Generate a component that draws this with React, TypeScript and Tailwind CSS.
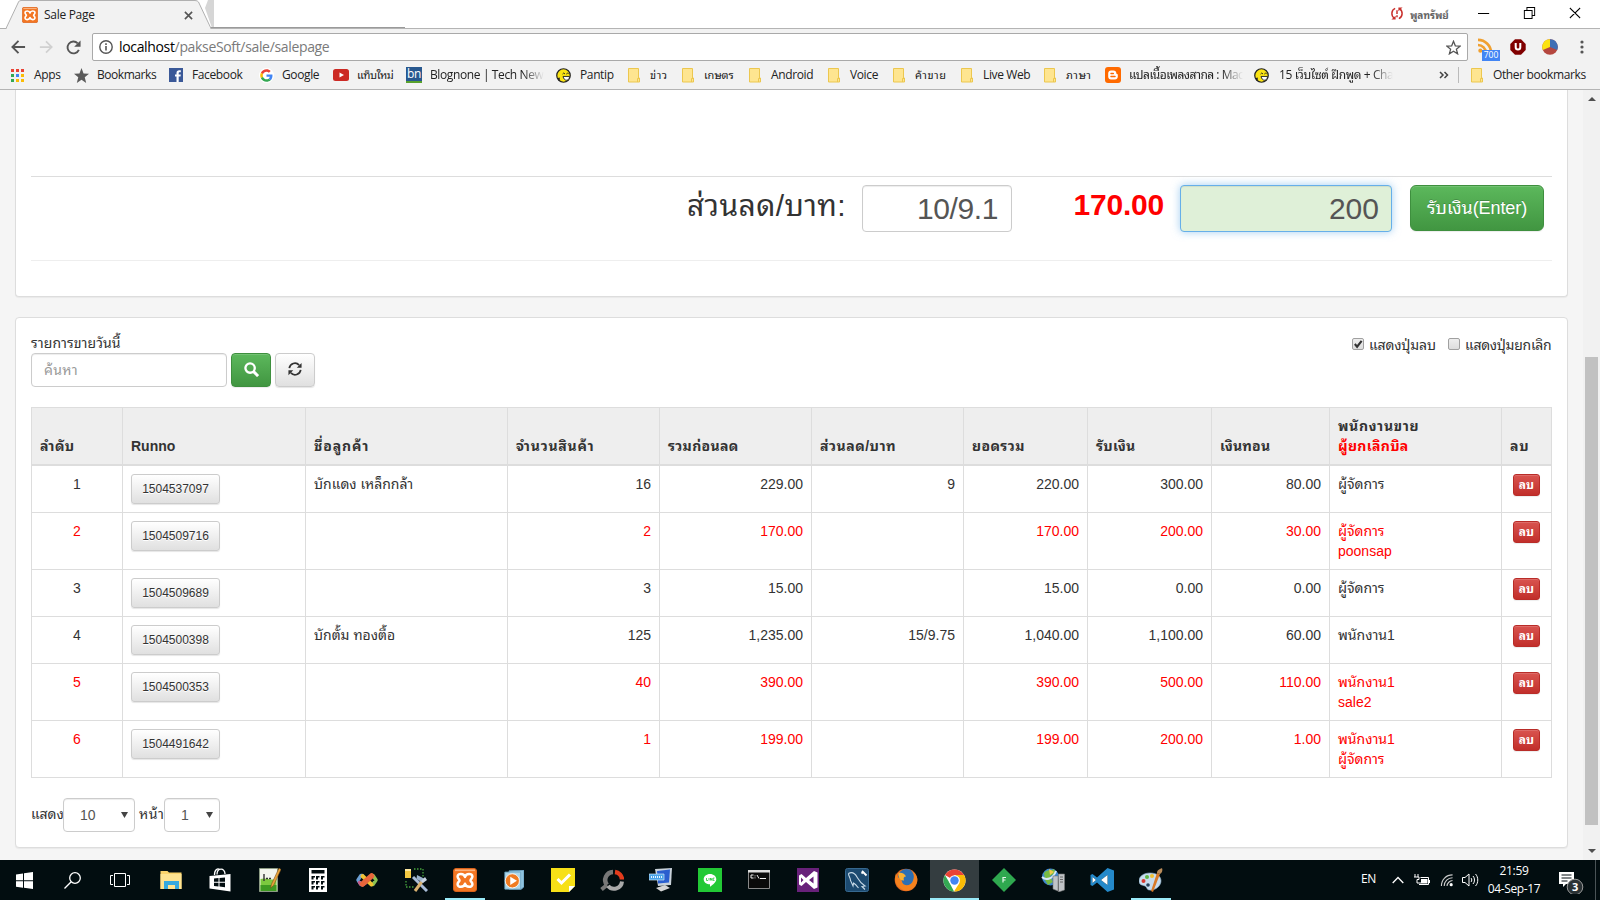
import React from "react";

type IconProps = { className?: string };

const BOX = "0 0 24 24";

function Xampp({ className }: IconProps) {
  return (
    <svg viewBox={BOX} className={className}>
      <rect x="0.5" y="0.5" width="23" height="23" rx="2.5" fill="#f37623" stroke="#d9611a" />
      <rect x="2" y="1.5" width="20" height="1.6" fill="#fbb27e" />
      <path
        d="M12 9C11 5 4.600 5 4.600 8.600c0 2 1.600 2.300 1.900 3.800-.3 1.500-1.900 1.800-1.900 3.800 0 3.600 6.400 3.600 7.400-.4 1 4 7.400 4 7.400.4 0-2-1.600-2.300-1.900-3.800.3-1.500 1.900-1.800 1.900-3.800 0-3.600-6.400-3.600-7.400.4z"
        fill="none" stroke="#fff" strokeWidth="2.500" strokeLinejoin="round"
      />
    </svg>
  );
}

function Folder() {
  return (
    <svg viewBox="0 0 12 15" className="h-[15px] w-3">
      <path d="M.5.500h10v9.500h1v4H.5z" fill="#fee590" stroke="#ecc74f" />
      <path d="M9.500 14v-3.500h2" fill="none" stroke="#ecc74f" />
    </svg>
  );
}

function Smiley() {
  return (
    <svg viewBox="0 0 16 16" className="h-[15px] w-[15px]">
      <circle cx="8" cy="8" r="7.200" fill="#fbe413" stroke="#222" strokeWidth="1.300" />
      <path d="M7 6.500l1.300-1.200L9.600 6.500M11 6.500l1.300-1.200 1.200 1.200" fill="none" stroke="#222" />
      <path d="M7.500 9h7c0 3-2 4-3.500 4s-3-1.500-3.500-4z" fill="#fff" stroke="#222" />
      <path d="M1 11l3-1v4z" fill="#222" />
    </svg>
  );
}

function AppsGrid() {
  const colors = ["#ea4335", "#ea4335", "#ea4335", "#34a853", "#4285f4", "#fbbc05", "#34a853", "#fbbc05", "#fbbc05"];
  return (
    <svg viewBox="0 0 13 13" className="h-[13px] w-[13px]">
      {colors.map((c, i) => (
        <rect key={i} x={(i % 3) * 5} y={Math.floor(i / 3) * 5} width="3" height="3" fill={c} />
      ))}
    </svg>
  );
}

function Google() {
  return (
    <svg viewBox="0 0 48 48" className="h-[15px] w-[15px]">
      <circle cx="24" cy="24" r="24" fill="#fff" />
      <g transform="translate(4 4) scale(.833)">
        <path fill="#EA4335" d="M24 9.500c3.540 0 6.710 1.220 9.210 3.600l6.850-6.850C35.900 2.380 30.470 0 24 0 14.620 0 6.510 5.380 2.560 13.220l7.980 6.190C12.430 13.720 17.740 9.500 24 9.500z" />
        <path fill="#4285F4" d="M46.980 24.550c0-1.570-.15-3.090-.38-4.550H24v9.020h12.940c-.58 2.960-2.260 5.480-4.780 7.180l7.730 6c4.510-4.180 7.090-10.360 7.090-17.650z" />
        <path fill="#FBBC05" d="M10.530 28.590c-.48-1.450-.76-2.990-.76-4.590s.27-3.140.76-4.590l-7.980-6.190C.92 16.460 0 20.120 0 24c0 3.880.92 7.540 2.560 10.780l7.970-6.190z" />
        <path fill="#34A853" d="M24 48c6.480 0 11.930-2.130 15.890-5.810l-7.730-6c-2.150 1.450-4.920 2.300-8.160 2.300-6.260 0-11.570-4.220-13.470-9.910l-7.980 6.190C6.510 42.620 14.620 48 24 48z" />
      </g>
    </svg>
  );
}

const fade = "[mask-image:linear-gradient(to_right,#000_93px,transparent_114px)]";

type Mark = { label: string; icon: React.ReactNode; box: string; text: string };

const bookmarks: Mark[] = [
  { label: "Apps", box: "w-[63px] gap-[10px]", text: "", icon: <AppsGrid /> },
  {
    label: "Bookmarks", box: "w-[95px] gap-[8px]", text: "tracking-[-0.45px]",
    icon: (
      <svg viewBox="0 0 24 24" className="h-[15px] w-[15px]"><path d="M12 0l3.300 8.600L24 9l-6.800 5.600L19.500 24 12 18.700 4.500 24l2.300-9.400L0 9l8.700-.4z" fill="#5a5a5a" /></svg>
    ),
  },
  {
    label: "Facebook", box: "w-[90px] gap-[9px]", text: "",
    icon: (
      <svg viewBox="0 0 14 14" className="h-[14px] w-[14px]"><path fill="#3b5998" d="M0 0h14v14H0z" /><path fill="#fff" d="M7.500 14V8.500H6v-2h1.500V5c0-1.800 1-2.800 2.700-2.800h1.600v2h-1.200c-.7 0-.9.3-.9.900v1.400h2.100l-.3 2H9.700V14z" /></svg>
    ),
  },
  { label: "Google", box: "w-[74px] gap-[8px]", text: "", icon: <Google /> },
  {
    label: "แท็บใหม่", box: "w-[73px] gap-[8px]", text: "text-[11px] tracking-[-0.45px]",
    icon: (
      <svg viewBox="0 0 16 12" className="h-[12px] w-[16px]"><rect width="16" height="12" rx="2.500" fill="#cc2a24" /><path d="M6.500 3.500v5L11 6z" fill="#fff" /></svg>
    ),
  },
  {
    label: "Blognone | Tech News", box: "w-[150px] gap-[8px]", text: fade,
    icon: (
      <span className="flex h-4 w-4 items-center justify-center border-b-2 border-[#58a12c] bg-[#28588f] text-[12px] leading-none text-white">bn</span>
    ),
  },
  { label: "Pantip", box: "w-[72px] gap-[9px]", text: "", icon: <Smiley /> },
  { label: "ข่าว", box: "w-[54px] gap-[10px]", text: "text-[11px] tracking-[0.6px]", icon: <Folder /> },
  { label: "เกษตร", box: "w-[67px] gap-[10px]", text: "text-[11px] tracking-[-0.1px]", icon: <Folder /> },
  { label: "Android", box: "w-[79px] gap-[10px]", text: "", icon: <Folder /> },
  { label: "Voice", box: "w-[65px] gap-[10px]", text: "", icon: <Folder /> },
  { label: "ค้าขาย", box: "w-[68px] gap-[10px]", text: "text-[11px] tracking-[0.5px]", icon: <Folder /> },
  { label: "Live Web", box: "w-[83px] gap-[10px]", text: "", icon: <Folder /> },
  { label: "ภาษา", box: "w-[61px] gap-[10px]", text: "text-[11px] tracking-[0.5px]", icon: <Folder /> },
  {
    label: "แปลเนื้อเพลงสากล : Mac", box: "w-[149px] gap-[8px]", text: "tracking-[-0.5px] " + fade,
    icon: (
      <svg viewBox="0 0 16 16" className="h-4 w-4"><rect width="16" height="16" rx="3" fill="#ff6a00" /><path d="M6 3.500h2.500C10.200 3.500 11.300 4.700 11.300 6c0 .6.300.9.700.9.500 0 .8.300.8.800v2c0 1.600-1.200 2.800-2.800 2.800H6c-1.600 0-2.800-1.200-2.800-2.800V6.300c0-1.600 1.200-2.800 2.800-2.800z" fill="#fff" /><path d="M6 6.400h2.300M6 9.600h4" stroke="#ff6a00" strokeWidth="1.500" strokeLinecap="round" /></svg>
    ),
  },
  { label: "15 เว็บไซต์ ฝึกพูด + Chat", box: "w-[185px] gap-[10px]", text: fade, icon: <Smiley /> },
];

function TitleBar() {
  return (
    <div className="relative flex h-[30px] items-start bg-white">
      <svg className="absolute left-0 top-0 h-[30px] w-full" viewBox="0 0 1600 30" preserveAspectRatio="none">
        <path d="M214 0h-6l-3 8 7 20h2z" fill="#d6d6d6" />
        <path d="M211 27.500H405" stroke="#9a9a9a" fill="none" />
        <path d="M0 28.500H1600" stroke="#b4b4b4" fill="none" />
        <path d="M0 29h1600v1H0z" fill="#f2f2f2" />
        <path d="M6 29.500L18.500 2Q19 .5 21 .5H195Q197.500.500 198.500 2L211 29.500z" fill="#f2f2f2" />
        <path d="M0 28.500H6L18.500 2Q19 .5 21 .5H195Q197.500.500 198.500 2L211 28.500" fill="none" stroke="#b0b0b0" />
      </svg>
      <div className="relative flex h-[30px] w-full items-center pl-[22px]">
        <Xampp className="h-4 w-4" />
        <span className="ml-[6px] w-[140px] text-[12px] tracking-[-0.3px] text-[#222]">Sale Page</span>
        <svg viewBox="0 0 10 10" className="h-[9px] w-[9px]"><path d="M1 1l8 8M9 1L1 9" stroke="#555" strokeWidth="1.800" /></svg>
        <svg viewBox="0 0 14 14" className="ml-auto mb-[3px] h-[13px] w-[14px]">
          <g fill="none" stroke="#c9302c" strokeWidth="1.600"><path d="M5 1.500C.5 3.500.5 9.500 4 12M9 12.500c4.500-2 4.500-8 1-10.500" /><path d="M7 3.500v4M7 9v2" /></g>
          <path d="M1 13.500h4.500V9.500zM13 .5H8.500v4z" fill="#c9302c" />
        </svg>
        <span className="ml-[6px] w-[39px] whitespace-nowrap text-[10px] font-bold tracking-[-0.1px] text-[#666]">พูลทรัพย์</span>
        <svg viewBox="0 0 120 12" className="mb-1 ml-[29px] mr-[19px] h-3 w-[103px]" preserveAspectRatio="none">
          <g fill="none" stroke="#000" strokeWidth="1.100"><path d="M0 6.500h13M54 3.500h9v8h-9zM57 3.500v-3h9v8h-3M107 1l12 10M119 1l-12 10" /></g>
        </svg>
      </div>
    </div>
  );
}

function Toolbar() {
  return (
    <div className="flex h-[34px] items-center bg-[#f2f2f2] pl-[11px]">
      <svg viewBox="0 0 16 16" className="h-4 w-[15px]"><path d="M15 8H2M8 1.500L1.500 8 8 14.500" fill="none" stroke="#555" strokeWidth="2" /></svg>
      <svg viewBox="0 0 16 16" className="ml-[13px] h-4 w-[14px]"><path d="M1 8h13M8 1.500L14.500 8 8 14.500" fill="none" stroke="#d0d0d0" strokeWidth="2" /></svg>
      <svg viewBox="0 0 16 16" className="ml-[13px] h-[15px] w-[15px]"><path d="M13.700 10.500A6.300 6.300 0 1 1 12.500 3.600" fill="none" stroke="#555" strokeWidth="2" /><path d="M15.500.500v6.800H8.700z" fill="#555" /></svg>
      <div className="ml-[11px] flex h-[28px] w-[1376px] items-center rounded-[2px] border border-[#a9a9a9] bg-white pl-[6px] pr-[6px]">
        <svg viewBox="0 0 14 14" className="h-[14px] w-[14px]"><circle cx="7" cy="7" r="6.200" fill="none" stroke="#555" strokeWidth="1.400" /><path d="M7 6v4.500M7 3.300v1.600" stroke="#555" strokeWidth="1.600" /></svg>
        <span className="mb-[2px] ml-[6px] text-[14px] tracking-[-0.34px] text-[#7a7a7a]"><span className="text-black">localhost</span>/pakseSoft/sale/salepage</span>
        <svg viewBox="0 0 24 24" className="ml-auto h-[15px] w-[15px]"><path d="M12 2l2.900 7.300 7.600.5-5.900 4.900 2 7.500L12 18l-6.600 4.200 2-7.500L1.500 9.800l7.600-.5z" fill="none" stroke="#555" strokeWidth="2" /></svg>
      </div>
      <div className="relative ml-[10px] h-[26px] w-[24px]">
        <svg viewBox="0 0 16 16" className="mt-[4px] h-[15px] w-[15px]"><circle cx="2.500" cy="13.500" r="2.200" fill="#f0a030" /><path d="M0 7.500A8.500 8.500 0 0 1 8.500 16M0 2A14 14 0 0 1 14 16" fill="none" stroke="#f0a030" strokeWidth="2.800" /></svg>
        <span className="absolute left-[4px] top-[16px] flex h-[11px] w-[18px] items-center justify-center bg-[#4285f4] text-[8.500px] text-white">700</span>
      </div>
      <svg viewBox="0 0 16 16" className="ml-[8px] h-4 w-4"><path d="M5 .3h6L15.700 5v6L11 15.700H5L.3 11V5z" fill="#800000" /><path d="M5.700 4v4.200a2.300 2.300 0 0 0 4.600 0V4" fill="none" stroke="#fff" strokeWidth="2" /></svg>
      <svg viewBox="0 0 16 16" className="ml-[16px] h-4 w-4"><circle cx="8" cy="8" r="7.800" fill="#b5473f" /><path d="M8 8V.2A7.800 7.800 0 0 0 .8 11z" fill="#fbe311" /><path d="M8 8V.2A7.800 7.800 0 0 1 15.200 11z" fill="#3f6fb5" /></svg>
      <svg viewBox="0 0 4 14" className="ml-[22px] h-[14px] w-[4px]"><g fill="#555"><circle cx="2" cy="2" r="1.600" /><circle cx="2" cy="7" r="1.600" /><circle cx="2" cy="12" r="1.600" /></g></svg>
    </div>
  );
}

function BookmarksBar() {
  return (
    <div className="flex h-[26px] items-center whitespace-nowrap border-b border-[#b4b4b4] bg-[#f2f2f2] pb-[3px] pl-[11px] text-[12px] tracking-[-0.38px] text-[#222]">
      {bookmarks.map((b) => (
        <div key={b.label} className={"flex shrink-0 items-center " + b.box}>
          <span className="shrink-0">{b.icon}</span>
          <span className={b.text}>{b.label}</span>
        </div>
      ))}
      <svg viewBox="0 0 10 8" className="h-2 w-[10px]"><path d="M1 1l3 3-3 3M5.500 1l3 3-3 3" fill="none" stroke="#444" strokeWidth="1.500" /></svg>
      <div className="ml-[9px] mr-[12px] h-4 w-px bg-[#bbb]" />
      <Folder />
      <span className="ml-[10px]">Other bookmarks</span>
    </div>
  );
}

type Row = {
  run: string; name: string; qty: string; before: string; disc: string;
  total: string; paid: string; change: string; seller: string[]; red: boolean; h: string;
};

const rows: Row[] = [
  { run: "1504537097", name: "บักแดง เหล็กกล้า", qty: "16", before: "229.00", disc: "9", total: "220.00", paid: "300.00", change: "80.00", seller: ["ผู้จัดการ"], red: false, h: "h-[47px]" },
  { run: "1504509716", name: "", qty: "2", before: "170.00", disc: "", total: "170.00", paid: "200.00", change: "30.00", seller: ["ผู้จัดการ", "poonsap"], red: true, h: "h-[57px]" },
  { run: "1504509689", name: "", qty: "3", before: "15.00", disc: "", total: "15.00", paid: "0.00", change: "0.00", seller: ["ผู้จัดการ"], red: false, h: "h-[47px]" },
  { run: "1504500398", name: "บักตั้ม ทองตื้อ", qty: "125", before: "1,235.00", disc: "15/9.75", total: "1,040.00", paid: "1,100.00", change: "60.00", seller: ["พนักงาน1"], red: false, h: "h-[47px]" },
  { run: "1504500353", name: "", qty: "40", before: "390.00", disc: "", total: "390.00", paid: "500.00", change: "110.00", seller: ["พนักงาน1", "sale2"], red: true, h: "h-[57px]" },
  { run: "1504491642", name: "", qty: "1", before: "199.00", disc: "", total: "199.00", paid: "200.00", change: "1.00", seller: ["พนักงาน1", "ผู้จัดการ"], red: true, h: "h-[57px]" },
];

const cell = "border-b border-r border-[#ddd] px-2 pt-2 align-top overflow-hidden";

function SalesTable() {
  return (
    <table className="mt-[20px] w-[1521px] table-fixed border-separate border-spacing-0 border-l border-t border-[#ddd] text-[14px] leading-5">
      <colgroup>
        <col className="w-[91px]" /><col className="w-[183px]" /><col className="w-[202px]" /><col className="w-[152px]" />
        <col className="w-[152px]" /><col className="w-[152px]" /><col className="w-[124px]" /><col className="w-[124px]" />
        <col className="w-[118px]" /><col className="w-[172px]" /><col className="w-[50px]" />
      </colgroup>
      <thead>
        <tr className="h-[58px] text-left [&>th]:border-b-2 [&>th]:border-r [&>th]:border-[#ddd] [&>th]:bg-[#eee] [&>th]:px-2 [&>th]:pb-[8px] [&>th]:align-bottom [&>th]:font-bold">
          <th className="tracking-[0.5px]">ลำดับ</th>
          <th>Runno</th>
          <th className="tracking-[0.9px]">ชื่อลูกค้า</th>
          <th className="tracking-[0.75px]">จำนวนสินค้า</th>
          <th className="tracking-[0.3px]">รวมก่อนลด</th>
          <th className="tracking-[0.5px]">ส่วนลด/บาท</th>
          <th className="tracking-[0.4px]">ยอดรวม</th>
          <th className="tracking-[0.3px]">รับเงิน</th>
          <th className="tracking-[0.2px]">เงินทอน</th>
          <th><span className="tracking-[0.65px]">พนักงานขาย</span><br /><span className="tracking-[0.3px] text-[#f00]">ผู้ยกเลิกบิล</span></th>
          <th className="tracking-[0.8px]">ลบ</th>
        </tr>
      </thead>
      <tbody>
        {rows.map((r, i) => (
          <tr key={r.run} className={r.h + (r.red ? " text-[#f00]" : "")}>
            <td className={cell + " text-center"}>{i + 1}</td>
            <td className={cell}>
              <button className="flex h-[30px] w-[89px] items-center justify-center rounded-[3px] border border-[#ccc] bg-linear-to-b from-white to-[#e0e0e0] text-[12px] text-[#333] shadow-[0_1px_1px_rgba(0,0,0,0.1)] [text-shadow:0_1px_0_#fff]">{r.run}</button>
            </td>
            <td className={cell}>{r.name}</td>
            <td className={cell + " text-right"}>{r.qty}</td>
            <td className={cell + " text-right"}>{r.before}</td>
            <td className={cell + " text-right"}>{r.disc}</td>
            <td className={cell + " text-right"}>{r.total}</td>
            <td className={cell + " text-right"}>{r.paid}</td>
            <td className={cell + " text-right"}>{r.change}</td>
            <td className={cell}>{r.seller.map((s) => <div key={s}>{s}</div>)}</td>
            <td className={cell}>
              <button className="mx-auto flex h-[22px] w-[27px] items-center justify-center rounded-[3px] border border-[#b92c28] bg-linear-to-b from-[#d9534f] to-[#c12e2a] text-[12px] font-bold leading-none text-white shadow-[inset_0_1px_0_rgba(255,255,255,0.15),0_1px_1px_rgba(0,0,0,0.075)]">ลบ</button>
            </td>
          </tr>
        ))}
      </tbody>
    </table>
  );
}

const field = "border border-[#ccc] bg-white text-[#555] shadow-[inset_0_1px_1px_rgba(0,0,0,0.075)]";
const green = "flex items-center justify-center border border-[#3e8f3e] bg-linear-to-b from-[#5cb85c] to-[#419641] text-white shadow-[inset_0_1px_0_rgba(255,255,255,0.15),0_1px_1px_rgba(0,0,0,0.075)]";

function Select({ value, box }: { value: string; box: string }) {
  return (
    <div className={"flex h-[34px] items-center justify-between rounded-[4px] pr-[6px] text-[14px] " + field + " " + box}>
      <span>{value}</span>
      <svg viewBox="0 0 7 6" className="mb-px h-[6px] w-[7px]" preserveAspectRatio="none"><path d="M0 0h7L3.500 6z" fill="#444" /></svg>
    </div>
  );
}

function Page() {
  return (
    <div className="flex h-[770px] overflow-hidden bg-[#f5f5f5] text-[14px] leading-5 text-[#333] font-['Liberation_Sans','Noto_Sans_Thai_Looped','Loma','Waree','Noto_Sans_Thai',sans-serif]">
      <div className="flex w-[1583px] flex-col pl-[15px]">
        <section className="h-[207px] w-[1553px] shrink-0 rounded-b-[4px] border border-t-0 border-[#ddd] bg-white px-[15px] shadow-[0_1px_1px_rgba(0,0,0,0.05)]">
          <div className="h-[86px]" />
          <div className="flex h-[84px] items-start border-t border-[#ddd] pt-[8px]">
            <div className="ml-auto mr-[16px] mt-1 whitespace-nowrap text-[30px] leading-[33px] tracking-[0.4px]">ส่วนลด/บาท:</div>
            <div className={"flex h-[47px] w-[150px] items-center justify-end rounded-[4px] pr-[13px] text-[30px] tracking-[-0.4px] " + field}>10/9.1</div>
            <div className="w-[152px] pt-[3px] text-right text-[30px] font-bold leading-[33px] tracking-[-0.2px] text-[#f00]">170.00</div>
            <div className="ml-[16px] flex h-[47px] w-[212px] items-center justify-end rounded-[4px] border border-[#66afe9] bg-[#dff0d8] pr-[12px] text-[30px] text-[#555] shadow-[inset_0_1px_1px_rgba(0,0,0,0.075),0_0_8px_rgba(102,175,233,0.6)]">200</div>
            <button className={"ml-[18px] mr-[8px] h-[46px] w-[134px] whitespace-nowrap rounded-[6px] text-[18px] tracking-[-0.1px] [text-shadow:0_-1px_0_rgba(0,0,0,0.2)] " + green}>รับเงิน(Enter)</button>
          </div>
          <div className="h-px bg-[#eee]" />
        </section>
        <section className="mt-[20px] h-[531px] w-[1553px] shrink-0 rounded-[4px] border border-[#ddd] bg-white px-[15px] pt-[15px] shadow-[0_1px_1px_rgba(0,0,0,0.05)]">
          <div className="flex h-[54px] justify-between">
            <div>
              <div className="h-5 tracking-[0.1px]">รายการขายวันนี้</div>
              <div className="flex gap-1">
                <div className={"flex h-[34px] w-[196px] items-center rounded-[4px] pl-[12px] " + field}><span className="tracking-[0.3px] text-[#999]">ค้นหา</span></div>
                <button className={"h-[34px] w-[40px] rounded-[4px] pb-px " + green}>
                  <svg viewBox="0 0 16 16" className="h-[15px] w-[15px]"><circle cx="6.500" cy="6.500" r="5" fill="none" stroke="#fff" strokeWidth="2.500" /><path d="M10 10l5 5" stroke="#fff" strokeWidth="3.200" /></svg>
                </button>
                <button className="flex h-[34px] w-[40px] items-center justify-center rounded-[4px] border border-[#ccc] bg-linear-to-b from-white to-[#e0e0e0] pb-[2px] pr-px shadow-[0_1px_1px_rgba(0,0,0,0.1)]">
                  <svg viewBox="0 0 16 16" className="h-[14px] w-[14px]"><path d="M1.500 7A6.500 6.500 0 0 1 12.700 3.500M14.500 9A6.500 6.500 0 0 1 3.300 12.500" fill="none" stroke="#333" strokeWidth="2" /><path d="M15.500 1v5.500H10zM.5 15V9.500H6z" fill="#333" /></svg>
                </button>
              </div>
            </div>
            <div className="flex h-[24px] items-center">
              <div className="mb-[3px] mr-[5px] h-[12px] w-[12px] rounded-[2px] border border-[#a0a0a0] bg-linear-to-b from-[#eee] to-[#ddd]">
                <svg viewBox="0 0 11 11" className="h-[10px] w-[10px]"><path d="M2 5.500l2.500 3L9.500 2" fill="none" stroke="#333" strokeWidth="2.300" /></svg>
              </div>
              <span className="w-[67px] whitespace-nowrap tracking-[-0.15px]">แสดงปุ่มลบ</span>
              <div className="mb-[3px] ml-[12px] mr-[5px] h-[12px] w-[12px] rounded-[2px] border border-[#a0a0a0] bg-linear-to-b from-[#eee] to-[#ddd]" />
              <span className="w-[87px] whitespace-nowrap tracking-[-0.28px]">แสดงปุ่มยกเลิก</span>
            </div>
          </div>
          <SalesTable />
          <div className="mt-[20px] flex items-center">
            <span className="mb-[2px] w-[32px] tracking-[-0.1px]">แสดง</span>
            <Select value="10" box="w-[72px] pl-[16px]" />
            <span className="mb-[2px] ml-[4px] w-[25px] tracking-[0.5px]">หน้า</span>
            <Select value="1" box="w-[56px] pl-[16px]" />
          </div>
        </section>
      </div>
      <div className="flex w-[17px] flex-col items-center bg-[#f1f1f1] py-[7px]">
        <svg viewBox="0 0 8 4" className="h-1 w-2"><path d="M0 4h8L4 0z" fill="#505050" /></svg>
        <div className="mt-[256px] h-[468px] w-[13px] bg-[#c1c1c1]" />
        <svg viewBox="0 0 8 4" className="mt-auto h-1 w-2"><path d="M0 0h8L4 4z" fill="#505050" /></svg>
      </div>
    </div>
  );
}

const S = "h-6 w-6";

const taskIcons: React.ReactNode[] = [
  <svg viewBox={BOX} className={S}><path d="M1.500 3h7L10 4.500h12.500V21h-21z" fill="#fbd36b" /><path d="M1.500 6h21v15h-21z" fill="#ffe391" /><path d="M5 13h15v8h-4v-4H9v4H5z" fill="#35a9e0" /></svg>,
  <svg viewBox={BOX} className={S}><path d="M1.500 8l21-2v17.500l-21-3z" fill="#fff" /><path d="M6.500 7C6.500 1 10 0 11.500 1.500M9 6.500C9-.500 17-.500 17 6" fill="none" stroke="#fff" strokeWidth="1.300" /><path d="M6 10.500l4.500-.4v3.700H6zM11.500 10l5.500-.5v4.300h-5.500zM6 14.800h4.500v3.700L6 18zM11.500 14.800H17v4.400l-5.500-.6z" fill="#020d10" /></svg>,
  <svg viewBox={BOX} className={S}><path d="M2.500.5h18v23h-18z" fill="#f2f5ee" stroke="#8c9b84" /><path d="M3.500 11c5-2 11 2 16 0v12h-16z" fill="#7cc93f" /><path d="M3.500 17h16v6h-16z" fill="#3e9a22" /><path d="M7 6v7M9 10.500h2M12 10.500h2" stroke="#333" strokeWidth="1.400" /><path d="M22 0L14.500 16l-1 4 3-2.500L24 1.500z" fill="#e8a33b" stroke="#6d4416" strokeWidth=".5" /></svg>,
  <svg viewBox={BOX} className={S}><path d="M3 0h18v24H3z" fill="#fff" /><path d="M5.500 2h13v3.500h-13z" fill="#020d10" /><g fill="#020d10">{[8, 13, 18].map((y) => [5.5, 10, 15].map((x) => <path key={x + "-" + y} d={`M${x} ${y}h3.500v1.500h-1.500v2h-2z`} />))}</g></svg>,
  <svg viewBox={BOX} className={S}><g fill="none" strokeLinejoin="round" strokeLinecap="round"><path d="M7.500 7.500H6L3 12l3 4.500h1.500" stroke="#6c9fd4" strokeWidth="3.500" /><path d="M16.500 7.500H18l3 4.500-3 4.500h-1.500" stroke="#8cc152" strokeWidth="3.500" /><path d="M4.500 14.500L6 16.500h2l3-2" stroke="#c05a8c" strokeWidth="3.500" /><path d="M7.500 8l9 8.500" stroke="#f1c232" strokeWidth="4" /><path d="M7.500 16L16.500 8" stroke="#e9663b" strokeWidth="5.500" /></g></svg>,
  <svg viewBox={BOX} className={S}><path d="M1 1h6v9H1z" fill="#f4c842" /><path d="M1 1h6v2H1z" fill="#ffe9a0" /><path d="M10 1h9v9M2 13v6h8" fill="none" stroke="#46a23c" strokeDasharray="1.500 1.500" strokeWidth="1.300" /><path d="M9 9l14 14" stroke="#a9bcd8" strokeWidth="3" /><path d="M19 12l-8 11" stroke="#d8b070" strokeWidth="3" /><path d="M13 7l7 3.500-1.500 4-6-3.500z" fill="#9bb2cc" /><path d="M17 13l4-4 2 3-4 3z" fill="#c9d4e2" /></svg>,
  <Xampp className={S} />,
  <svg viewBox={BOX} className="h-5 w-5"><path d="M6 1l18-1v20l-3 3H6z" fill="#8fc3df" stroke="#5b92b3" /><path d="M1 2.500h19V23H1z" fill="#aed7ea" stroke="#6ba3c2" /><circle cx="10" cy="13" r="8.500" fill="#ef7b22" stroke="#fff" /><path d="M7.500 8v10l8-5z" fill="#fff" /></svg>,
  <svg viewBox={BOX} className={S}><path d="M0 0h24v18l-6 6H0z" fill="#f7e017" /><path d="M18 18h6l-6 6z" fill="#fff" /><path d="M6.500 11l4 4L19 6.500" fill="none" stroke="#fff" strokeWidth="3" /></svg>,
  <svg viewBox={BOX} className={S}><g fill="none"><path d="M1.500 21.500L7 17" stroke="#777" strokeWidth="4" /><path d="M7 17A8 8 0 0 1 13 4" stroke="#777" strokeWidth="4.500" /><path d="M15 4a8 8 0 0 1 7 7.500" stroke="#e33b1c" strokeWidth="4.500" /><path d="M22 13.500a8 8 0 0 1-14 4.500" stroke="#a9a9a9" strokeWidth="4" /></g></svg>,
  <svg viewBox={BOX} className={S}><path d="M6 1l17-1-1 17-13 1z" fill="#c9d2da" /><path d="M8 3l13-1.500-1 13L9 15.500z" fill="#2a5fcf" /><path d="M0 6h15v6H0z" fill="#4aa3e8" stroke="#cfe6f7" strokeWidth=".7" /><path d="M2 9h11" stroke="#e8f4ff" strokeDasharray="1 1" strokeWidth="2" /><path d="M7 20l9-3 5 3-9 3.500z" fill="#d5d5d5" /></svg>,
  <svg viewBox={BOX} className={S}><path d="M0 0h24v24H0z" fill="#22c935" /><path d="M12 6c3.600 0 6.300 2.300 6.300 5.200 0 2.900-3.300 5.300-6.300 7.600v-2.500c-3.500 0-6.300-2.200-6.300-5.100S8.500 6 12 6z" fill="#fff" /><path d="M8.500 10v2.500h1.500M11 10v2.500M12.500 12.500V10l1.500 2.500V10M16.500 10h-1.300v2.500h1.300" fill="none" stroke="#22c935" strokeWidth=".8" /></svg>,
  <svg viewBox={BOX} className={S}><path d="M1.500 2.500h21v18h-21z" fill="#0a0a0a" stroke="#888" /><path d="M1 2h22v2.500H1z" fill="#ddd" /><path d="M6.500 7H4v3h2.500M8 7.500v.800M8 9.500v.800M10 7l2 3.500M13 10.500h6" fill="none" stroke="#eee" /></svg>,
  <svg viewBox={BOX} className={S}><path d="M1 0h22v24H1z" fill="#68217a" /><path d="M18 3l3.500 1.500v15L18 21l-8-7-4.500 4L3 16.500v-9L5.500 6l4.500 4zM17.500 8.500L13 12l4.500 3.500zM5 9.500v5L7.500 12z" fill="#fff" fillRule="evenodd" /></svg>,
  <svg viewBox={BOX} className={S}><rect x=".5" y=".5" width="23" height="23" rx="2" fill="#1c4a70" stroke="#36688f" /><path d="M3.500 5.500c3.500-2 6.500 0 8.500 3.500s3 6 8 9l-3 .5 3 3M3.500 5.500c0 3 2 4 2 7l2.500 5.500.5-3c2 1 3.500 3 5 5" fill="none" stroke="#c9dbe8" strokeWidth="1.100" /><path d="M17 3l4.500 4.500M16.500 5.500l2-2" stroke="#fff" strokeWidth="1.800" /></svg>,
  <svg viewBox={BOX} className={S}><circle cx="12" cy="12" r="11.300" fill="#e66a1f" /><circle cx="12.500" cy="9.500" r="8.500" fill="#2d6fb4" /><path d="M2 5c1 4 2.500 4.500 4.500 5.500s.5 4 3.500 6 8 0 9-4c2-5 0-8-2-10 6 3 7.500 9 5.500 13-3 6.500-9 9-15 5.500S0 12 2 5z" fill="#f5821e" /><path d="M4.500 5c3-1 6.500 1 7.500 3.500-2 0-3 1.500-2 4-4 .5-6-3.500-5.500-7.500z" fill="#fbb233" /></svg>,
  <svg viewBox={BOX} className="h-[23px] w-[23px]"><circle cx="12" cy="12" r="11.500" fill="#fff" /><path d="M12 12L2 6.300A11.500 11.500 0 0 1 22 6.300H12z" fill="#ea4335" /><path d="M2 6.300L7.200 15l4.300 8.500A11.500 11.500 0 0 1 2 6.300z" fill="#34a853" /><path d="M22 6.300A11.500 11.500 0 0 1 11.500 23.500L16.900 14.800 17 9l-5-2.700z" fill="#fbbc05" /><circle cx="12" cy="12" r="5.600" fill="#fff" /><circle cx="12" cy="12" r="4.400" fill="#4285f4" /></svg>,
  <svg viewBox={BOX} className={S}><path d="M12 0l12 12-12 12L0 12z" fill="#2fa84f" /><path d="M14 9.500h-3v5M11 12h2.500" fill="none" stroke="#e5f5e9" strokeWidth="1.200" /></svg>,
  <svg viewBox={BOX} className={S}><circle cx="9.500" cy="9" r="8.500" fill="#3d86cf" /><path d="M3 5c3-4 7-2 10-4l2 4-6 3 3 6-5 3-3-5z" fill="#77b943" /><path d="M1 9c4 4 11 2 14-6" fill="none" stroke="#d7e6f5" strokeWidth="2" /><path d="M8 1l5 3-4 3z" fill="#f3c84b" /><path d="M12 8h5v15l-5-2zM17.500 6h6v16l-6 2z" fill="#bfc3c7" stroke="#777" strokeWidth=".6" /><path d="M19 9h3M19 11.500h3M19 14h3" stroke="#666" /></svg>,
  <svg viewBox={BOX} className={S}><path d="M17.500 0L24 2.500v19L17.500 24 7 14.500 2.500 18 .5 17V7l2-1L7 9.500zM17.500 7L11 12l6.500 5zM2.500 9v6L6 12z" fill="#2489ca" fillRule="evenodd" /><path d="M17.500 7L11 12l6.500 5zM2.500 9v6L6 12z" fill="#fff" /></svg>,
  <svg viewBox={BOX} className={S}><path d="M11 5c8 0 11 4 11 8 0 5-6 10-12 9-2 0-2-3-4-4-3-1-6-1-6-5 0-5 5-8 11-8z" fill="#c8ddee" stroke="#8eb1cc" strokeWidth=".6" /><circle cx="4.500" cy="13" r="2" fill="#d83a2f" /><circle cx="8" cy="9" r="2" fill="#5fb746" /><circle cx="13" cy="8" r="2" fill="#f1c232" /><circle cx="9" cy="17" r="1.800" fill="#26405a" /><path d="M18 5l3 1-7 18-2-1z" fill="#d97a27" /><path d="M18 5c0-3 3-4 5-5 1 2 0 5-2 6z" fill="#b98b5a" /></svg>,
];

function Taskbar() {
  return (
    <div className="flex h-[40px] items-center bg-[#020d10] font-['Open_Sans','Noto_Sans_Thai',sans-serif] text-white">
      <div className="flex w-[48px] justify-center"><svg viewBox="0 0 17 17" className="h-[17px] w-[17px]"><path d="M0 2.500l7-1v6.700H0zM8 1.300L17 0v8.200H8zM0 9.200h7v6.600l-7-1zM8 9.200h9V17l-9-1.200z" fill="#fff" /></svg></div>
      <div className="flex w-[48px] justify-center"><svg viewBox="0 0 17 17" className="h-[17px] w-[17px]"><circle cx="11" cy="6" r="5.300" fill="none" stroke="#fff" strokeWidth="1.300" /><path d="M7.200 9.800L.5 16.500" stroke="#fff" strokeWidth="1.300" /></svg></div>
      <div className="flex w-[50px] pl-[14px]"><svg viewBox="0 0 20 14" className="h-[14px] w-[20px]"><path d="M4.500.500h11v13h-11zM3 2.500H.5v9H3M17 2.500h2.500v9H17" fill="none" stroke="#fff" /></svg></div>
      {taskIcons.map((icon, i) => (
        <div key={i} className={"flex h-[40px] w-[49px] flex-col items-center justify-between " + (i === 16 ? "bg-[#343d40]" : "")}>
          <div className="flex h-[38px] items-center pt-[2px]">{icon}</div>
          {i === 16 && <div className="h-[2px] w-full bg-[#9aeaf8]" />}
          {(i === 6 || i === 20) && <div className="h-[2px] w-[40px] bg-[#9aeaf8]" />}
        </div>
      ))}
      <span className="mb-[3px] ml-[186px] w-[16px] text-[12px] tracking-[-0.5px]">EN</span>
      <svg viewBox="0 0 12 8" className="ml-[15px] h-2 w-3"><path d="M.7 7L6 1.500 11.300 7" fill="none" stroke="#fff" strokeWidth="1.300" /></svg>
      <svg viewBox="0 0 16 12" className="ml-[10px] h-3 w-4"><path d="M6.500 3.500h8v7H5M15.500 6v3" fill="none" stroke="#fff" /><path d="M7 5h6.500v4.500H7z" fill="#fff" /><path d="M1 0v3M4 0v3M0 3h5v2.500H3V9h4" fill="none" stroke="#fff" /></svg>
      <svg viewBox="0 0 14 14" className="ml-[10px] h-[13px] w-[14px]"><g fill="none" stroke="#ccc" strokeWidth="1.200"><path d="M1 13C1 6 6 1 13 1M4 13c0-5 4-9 9-9M7 13c0-3 3-6 6-6" /></g><circle cx="11.500" cy="11.500" r="1.700" fill="#fff" /></svg>
      <svg viewBox="0 0 17 14" className="ml-[8px] h-[14px] w-[17px]"><g fill="none" stroke="#fff"><path d="M.5 4.500H3l4-3.500v12L3 9.500H.5z" /><path d="M9 5c1 1 1 3 0 4M11 3c2 2 2 6 0 8M13.500 1c3 3 3 9 0 12" /></g></svg>
      <div className="ml-[7px] flex w-[56px] flex-col items-center whitespace-nowrap text-[12px] leading-[18px] tracking-[-0.35px]"><span>21:59</span><span>04-Sep-17</span></div>
      <div className="relative ml-[16px] h-[24px] w-[26px]">
        <svg viewBox="0 0 26 26" className="h-[26px] w-[26px]"><path d="M1 4h15v12H8l-3 3v-3H1z" fill="#fff" /><path d="M3.500 7h10M3.500 10h10M3.500 13h6" stroke="#020d10" /><circle cx="17" cy="19" r="7.800" fill="#2a3235" stroke="#999" /></svg>
        <span className="absolute left-[14px] top-[13px] text-[11px] font-bold leading-3">3</span>
      </div>
      <div className="ml-auto mr-[4px] h-full w-px bg-[#4a5356]" />
    </div>
  );
}

export default function App() {
  return (
    <div className="h-[900px] w-[1600px] overflow-hidden bg-[#f5f5f5]">
      <div className="font-['Open_Sans','Noto_Sans_Thai_Looped','Loma','Waree','Noto_Sans_Thai',sans-serif]">
        <TitleBar />
        <Toolbar />
        <BookmarksBar />
      </div>
      <Page />
      <Taskbar />
    </div>
  );
}
